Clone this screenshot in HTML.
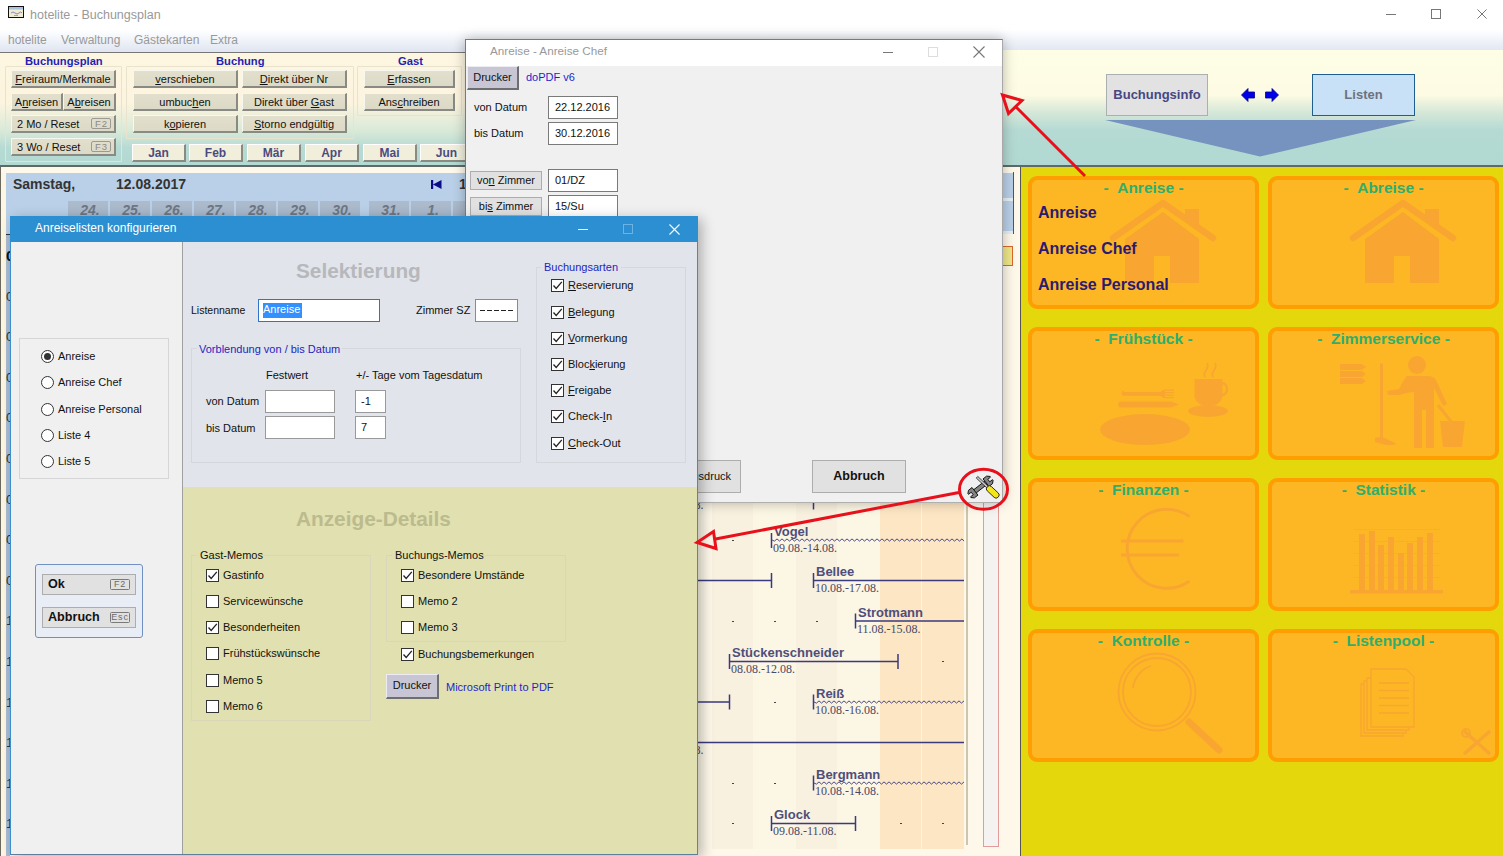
<!DOCTYPE html>
<html><head><meta charset="utf-8">
<style>
*{margin:0;padding:0;box-sizing:border-box}
html,body{width:1503px;height:856px;overflow:hidden;background:#fff;font-family:"Liberation Sans",sans-serif;position:relative}
.a{position:absolute}
.t{position:absolute;white-space:nowrap;line-height:1}
#titlebar{left:0;top:0;width:1503px;height:30px;background:#fff}
#menubar{left:0;top:30px;width:1503px;height:22px;background:linear-gradient(#fff,#dfe5f1)}
#tb{left:0;top:52px;width:1002px;height:114px;background:linear-gradient(#fdf6e1 0px,#fcf4de 50px,#d9e9d8 78px,#b6dad4 95px,#b3d9d3 114px);border-top:1px solid #777}
#tb2{left:1002px;top:50px;width:501px;height:116px;background:linear-gradient(#fefde6 0px,#fdfbe3 45px,#d6e8d8 62px,#b5dad4 80px,#b1d8d2 116px)}
.grp{position:absolute;border:1px solid #e9e2cc;border-radius:1px}
.btn{position:absolute;background:linear-gradient(#e2e0cd,#dcdac6);border-right:2px solid #8a8a84;border-bottom:2px solid #8a8a84;border-top:1px solid #f7f7ef;border-left:1px solid #f7f7ef;font-size:12px;color:#111;text-align:center;line-height:16px}
.lbl{position:absolute;font-weight:bold;color:#1f1fb3;line-height:1}
.mon{position:absolute;background:#f1efdc;border-right:2px solid #8a8a84;border-bottom:2px solid #8a8a84;border-top:1px solid #fff;border-left:1px solid #fff;font-size:12px;font-weight:bold;color:#4b4b7f;text-align:center;line-height:17px}
u{text-decoration:underline}
.rad{width:13px;height:13px;border:1px solid #333;border-radius:50%;background:#fff}
.cb{width:13px;height:13px;border:1px solid #333;background:#fff}
.cb svg{position:absolute;left:0;top:0}
.okb{background:#e1e1e1;border:1px solid #adadad;font-size:12.6px;font-weight:bold;line-height:19px;padding-left:5px;color:#111}
.fk2{position:absolute;right:5px;top:4px;width:20px;height:11px;border:1px solid #7a7a7a;border-radius:1.5px;font-size:9px;font-weight:normal;line-height:9px;color:#6a6a6a;text-align:center;letter-spacing:0.8px}
.inp2{background:#fff;border:1px solid #999;font-size:11px;line-height:21px;padding-left:5px;color:#111}
.inp{background:#fff;border:1px solid #7a7a7a;font-size:11px;line-height:21px;padding-left:6px;color:#111}
.zb{background:#e1e1e1;border:1px solid #adadad;font-size:11px;line-height:17px;text-align:center;color:#111}
.card{position:absolute;width:231px;height:133px;background:#fdb724;border:4px solid #ff9e00;border-radius:9px}
.ct{font-size:15.5px;font-weight:bold;color:#2fae6c}
.al{font-size:16px;font-weight:bold;color:#2c1a72}
.bn{font-size:13px;font-weight:bold;color:#4e4e7c}
.bd{font-family:"Liberation Serif",serif;font-size:12px;color:#4a4a66}
.dc{background:linear-gradient(#adbccd,#a6b6c9);color:#6e7782;font-weight:bold;font-style:italic;font-size:14px;text-align:center;line-height:18px;padding-left:4px}
.fk{position:absolute;right:3px;top:2px;width:20px;height:11px;border:1px solid #9a9a92;border-radius:2px;font-size:9.5px;line-height:9px;color:#8a8a85;text-align:center;letter-spacing:1px;padding-left:1px}
</style></head><body>
<div id="titlebar" class="a"></div>
<!-- app icon -->
<svg class="a" style="left:8px;top:6px" width="16" height="12"><rect x="0.5" y="0.5" width="15" height="11" fill="#eeecd2" stroke="#111"/><rect x="1" y="1" width="14" height="2.5" fill="#a9c3dc"/><path d="M3 7q2-2 4 0t4 0 3 0" fill="none" stroke="#8a7ab0" stroke-width="0.9"/><rect x="6" y="9" width="4" height="1" fill="#b0a080"/></svg>
<div class="t" style="left:30px;top:9px;font-size:12.5px;color:#999">hotelite - Buchungsplan</div>
<div class="a" style="left:1386px;top:14px;width:10px;height:1px;background:#777"></div>
<div class="a" style="left:1431px;top:9px;width:10px;height:10px;border:1px solid #777"></div>
<svg class="a" style="left:1477px;top:9px" width="10" height="10"><path d="M0.5 0.5L9.5 9.5M9.5 0.5L0.5 9.5" stroke="#777" stroke-width="1"/></svg>

<div id="menubar" class="a"></div>
<div class="t" style="left:8px;top:34px;font-size:12px;color:#999">hotelite</div>
<div class="t" style="left:61px;top:34px;font-size:12px;color:#999">Verwaltung</div>
<div class="t" style="left:134px;top:34px;font-size:12px;color:#999">Gästekarten</div>
<div class="t" style="left:210px;top:34px;font-size:12px;color:#999">Extra</div>

<div id="tb" class="a"></div>
<div id="tb2" class="a"></div>

<div class="a" style="left:0;top:165px;width:1503px;height:2px;background:#5f6a66"></div>
<!-- group boxes -->
<div class="grp" style="left:5px;top:66px;width:117px;height:96px"></div>
<div class="grp" style="left:126px;top:66px;width:228px;height:73px"></div>
<div class="grp" style="left:357px;top:66px;width:105px;height:50px"></div>
<div class="lbl" style="left:25px;top:56px;font-size:11.2px">Buchungsplan</div>
<div class="lbl" style="left:216px;top:56px;font-size:11.2px">Buchung</div>
<div class="lbl" style="left:398px;top:56px;font-size:11.2px">Gast</div>
<!-- buttons -->
<div class="btn" style="left:11px;top:70px;width:105px;height:18px;font-size:11px"><u>F</u>reiraum/Merkmale</div>
<div class="btn" style="left:11px;top:93px;width:52px;height:18px;font-size:11px">A<u>n</u>reisen</div>
<div class="btn" style="left:63px;top:93px;width:53px;height:18px;font-size:11px">A<u>b</u>reisen</div>
<div class="btn" style="left:11px;top:115px;width:105px;height:18px;font-size:11px;text-align:left;padding-left:5px">2 Mo / Reset<span class="fk">F2</span></div>
<div class="btn" style="left:11px;top:138px;width:105px;height:18px;font-size:11px;text-align:left;padding-left:5px">3 Wo / Reset<span class="fk">F3</span></div>
<div class="btn" style="left:133px;top:70px;width:105px;height:18px;font-size:11px"><u>v</u>erschieben</div>
<div class="btn" style="left:133px;top:93px;width:105px;height:18px;font-size:11px">umbuc<u>h</u>en</div>
<div class="btn" style="left:133px;top:115px;width:105px;height:18px;font-size:11px">k<u>o</u>pieren</div>
<div class="btn" style="left:242px;top:70px;width:105px;height:18px;font-size:11px"><u>D</u>irekt über Nr</div>
<div class="btn" style="left:242px;top:93px;width:105px;height:18px;font-size:11px">Direkt über <u>G</u>ast</div>
<div class="btn" style="left:242px;top:115px;width:105px;height:18px;font-size:11px"><u>S</u>torno endgültig</div>
<div class="btn" style="left:364px;top:70px;width:91px;height:18px;font-size:11px"><u>E</u>rfassen</div>
<div class="btn" style="left:364px;top:93px;width:91px;height:18px;font-size:11px">Ans<u>c</u>hreiben</div>
<!-- months -->
<div class="mon" style="left:132px;top:144px;width:54px;height:18px">Jan</div>
<div class="mon" style="left:189px;top:144px;width:54px;height:18px">Feb</div>
<div class="mon" style="left:247px;top:144px;width:54px;height:18px">Mär</div>
<div class="mon" style="left:305px;top:144px;width:54px;height:18px">Apr</div>
<div class="mon" style="left:363px;top:144px;width:54px;height:18px">Mai</div>
<div class="mon" style="left:420px;top:144px;width:54px;height:18px">Jun</div>
<!-- right side -->
<div class="a" style="left:1106px;top:74px;width:102px;height:42px;background:#e2e2e2;border:1px solid #aab0b0;font-weight:bold;font-size:13px;color:#474782;text-align:center;line-height:40px">Buchungsinfo</div>
<div class="a" style="left:1312px;top:74px;width:103px;height:42px;background:#c9e1f7;border:1px solid #1f5f8f;font-weight:bold;font-size:13px;color:#6d7280;text-align:center;line-height:40px">Listen</div>
<svg class="a" style="left:1240px;top:86px" width="40" height="18"><path d="M1.5 9L8 2.5V6H14.5V12H8V15.5Z" fill="#0000e8" stroke="#00008a" stroke-width="0.8"/><path d="M38.5 9L32 2.5V6H25.5V12H32V15.5Z" fill="#0000e8" stroke="#00008a" stroke-width="0.8"/></svg>
<svg class="a" style="left:1100px;top:117px" width="320" height="42"><path d="M5 3L316 3L160 39.5Z" fill="#7593be"/></svg>

<!-- booking plan -->
<div class="a" style="left:0;top:167px;width:1020px;height:689px;background:#fdf8e9"></div>
<div class="a" style="left:0;top:167px;width:1px;height:689px;background:#6a6a60"></div>
<div class="a" style="left:6px;top:173px;width:1008px;height:61px;background:#b9d0e8"></div>
<div class="a" style="left:1013px;top:172px;width:1px;height:62px;background:#555"></div>
<div class="a" style="left:1002px;top:198px;width:11px;height:3px;background:#e6eef6"></div>
<div class="a" style="left:1002px;top:231px;width:11px;height:3px;background:#e6eef6"></div>
<div class="t" style="left:13px;top:177px;font-size:14px;font-weight:bold;color:#333">Samstag,</div>
<div class="t" style="left:116px;top:177px;font-size:14px;font-weight:bold;color:#333">12.08.2017</div>
<svg class="a" style="left:430px;top:179px" width="13" height="11"><path d="M1 1H3.2V10H1Z M3 5.5L11.5 1V10Z" fill="#0a0a8a"/></svg>
<div class="t" style="left:459px;top:177px;font-size:14px;font-weight:bold;color:#333">1</div>
<div class="a dc" style="left:68px;top:201px;width:40px;height:16px">24.</div>
<div class="a dc" style="left:110px;top:201px;width:40px;height:16px">25.</div>
<div class="a dc" style="left:152px;top:201px;width:40px;height:16px">26.</div>
<div class="a dc" style="left:194px;top:201px;width:40px;height:16px">27.</div>
<div class="a dc" style="left:236px;top:201px;width:40px;height:16px">28.</div>
<div class="a dc" style="left:278px;top:201px;width:40px;height:16px">29.</div>
<div class="a dc" style="left:320px;top:201px;width:40px;height:16px">30.</div>
<div class="a dc" style="left:369px;top:201px;width:40px;height:16px">31.</div>
<div class="a dc" style="left:411px;top:201px;width:40px;height:16px">1.</div>
<div class="a dc" style="left:453px;top:201px;width:40px;height:16px"></div>
<div class="a" style="left:5px;top:234px;width:5px;height:622px;background:#a9bcd3"></div>
<div class="a" style="left:5px;top:234px;width:5px;height:1px;background:#333"></div>
<div class="a" style="left:1px;top:173px;width:5px;height:683px;background:#fdf6e3"></div>
<div class="a" style="left:712px;top:234px;width:41px;height:615px;background:#f9f1df"></div>
<div class="a" style="left:753px;top:234px;width:43px;height:615px;background:#fcf6e4"></div>
<div class="a" style="left:796px;top:234px;width:41px;height:615px;background:#f9f1df"></div>
<div class="a" style="left:837px;top:234px;width:43px;height:615px;background:#fcf6e4"></div>
<div class="a" style="left:880px;top:234px;width:42px;height:615px;background:#fde6c4"></div>
<div class="a" style="left:922px;top:234px;width:41.5px;height:615px;background:#fde6c4"></div>
<div class="a" style="left:921px;top:234px;width:1px;height:615px;background:#fff3e2"></div>
<div class="a" style="left:966px;top:234px;width:1.5px;height:611px;background:#cdc6ae"></div>
<div class="a" style="left:983px;top:234px;width:16px;height:613px;background:#f5f3f2;border:1px solid #e29a9a;border-top:none"></div>
<div class="a" style="left:1002px;top:246px;width:11px;height:20px;background:#eee68a;border:1px solid #d9682a;border-left:none"></div>
<div class="a" style="left:1020px;top:167px;width:1px;height:689px;background:#555"></div>
<svg class="a" style="left:0;top:0" width="1020" height="856">
<rect x="812.75" y="494.5" width="1.5" height="15" fill="#3a3a7e"/>
<rect x="732" y="540" width="2" height="1" fill="#444"/>
<rect x="770.75" y="533.0" width="1.5" height="15" fill="#3a3a7e"/>
<path d="M772 540.0 L774.5 541.1 L777.0 538.9 L779.5 541.1 L782.0 538.9 L784.5 541.1 L787.0 538.9 L789.5 541.1 L792.0 538.9 L794.5 541.1 L797.0 538.9 L799.5 541.1 L802.0 538.9 L804.5 541.1 L807.0 538.9 L809.5 541.1 L812.0 538.9 L814.5 541.1 L817.0 538.9 L819.5 541.1 L822.0 538.9 L824.5 541.1 L827.0 538.9 L829.5 541.1 L832.0 538.9 L834.5 541.1 L837.0 538.9 L839.5 541.1 L842.0 538.9 L844.5 541.1 L847.0 538.9 L849.5 541.1 L852.0 538.9 L854.5 541.1 L857.0 538.9 L859.5 541.1 L862.0 538.9 L864.5 541.1 L867.0 538.9 L869.5 541.1 L872.0 538.9 L874.5 541.1 L877.0 538.9 L879.5 541.1 L882.0 538.9 L884.5 541.1 L887.0 538.9 L889.5 541.1 L892.0 538.9 L894.5 541.1 L897.0 538.9 L899.5 541.1 L902.0 538.9 L904.5 541.1 L907.0 538.9 L909.5 541.1 L912.0 538.9 L914.5 541.1 L917.0 538.9 L919.5 541.1 L922.0 538.9 L924.5 541.1 L927.0 538.9 L929.5 541.1 L932.0 538.9 L934.5 541.1 L937.0 538.9 L939.5 541.1 L942.0 538.9 L944.5 541.1 L947.0 538.9 L949.5 541.1 L952.0 538.9 L954.5 541.1 L957.0 538.9 L959.5 541.1 L962.0 538.9 L964.0 541.1" fill="none" stroke="#4a4a86" stroke-width="1"/>
<rect x="698" y="579.75" width="73.5" height="1.5" fill="#3a3a7e"/>
<rect x="770.75" y="573.0" width="1.5" height="15" fill="#3a3a7e"/>
<rect x="812.75" y="573.0" width="1.5" height="15" fill="#3a3a7e"/>
<rect x="813.5" y="579.75" width="150.5" height="1.5" fill="#3a3a7e"/>
<rect x="732" y="621" width="2" height="1" fill="#444"/>
<rect x="774" y="621" width="2" height="1" fill="#444"/>
<rect x="816" y="621" width="2" height="1" fill="#444"/>
<rect x="854.75" y="613.5" width="1.5" height="15" fill="#3a3a7e"/>
<rect x="855.5" y="620.25" width="108.5" height="1.5" fill="#3a3a7e"/>
<rect x="728.75" y="654.0" width="1.5" height="15" fill="#3a3a7e"/>
<rect x="729.5" y="660.75" width="168.5" height="1.5" fill="#3a3a7e"/>
<rect x="897.25" y="654.0" width="1.5" height="15" fill="#3a3a7e"/>
<rect x="942" y="661" width="2" height="1" fill="#444"/>
<rect x="698" y="701.25" width="31.5" height="1.5" fill="#3a3a7e"/>
<rect x="728.75" y="694.5" width="1.5" height="15" fill="#3a3a7e"/>
<rect x="774" y="702" width="2" height="1" fill="#444"/>
<rect x="812.75" y="694.5" width="1.5" height="15" fill="#3a3a7e"/>
<path d="M814 702.0 L816.5 703.1 L819.0 700.9 L821.5 703.1 L824.0 700.9 L826.5 703.1 L829.0 700.9 L831.5 703.1 L834.0 700.9 L836.5 703.1 L839.0 700.9 L841.5 703.1 L844.0 700.9 L846.5 703.1 L849.0 700.9 L851.5 703.1 L854.0 700.9 L856.5 703.1 L859.0 700.9 L861.5 703.1 L864.0 700.9 L866.5 703.1 L869.0 700.9 L871.5 703.1 L874.0 700.9 L876.5 703.1 L879.0 700.9 L881.5 703.1 L884.0 700.9 L886.5 703.1 L889.0 700.9 L891.5 703.1 L894.0 700.9 L896.5 703.1 L899.0 700.9 L901.5 703.1 L904.0 700.9 L906.5 703.1 L909.0 700.9 L911.5 703.1 L914.0 700.9 L916.5 703.1 L919.0 700.9 L921.5 703.1 L924.0 700.9 L926.5 703.1 L929.0 700.9 L931.5 703.1 L934.0 700.9 L936.5 703.1 L939.0 700.9 L941.5 703.1 L944.0 700.9 L946.5 703.1 L949.0 700.9 L951.5 703.1 L954.0 700.9 L956.5 703.1 L959.0 700.9 L961.5 703.1 L964.0 700.9" fill="none" stroke="#4a4a86" stroke-width="1"/>
<rect x="698" y="741.75" width="266" height="1.5" fill="#3a3a7e"/>
<rect x="732" y="783" width="2" height="1" fill="#444"/>
<rect x="774" y="783" width="2" height="1" fill="#444"/>
<rect x="812.75" y="775.5" width="1.5" height="15" fill="#3a3a7e"/>
<path d="M814 783.0 L816.5 784.1 L819.0 781.9 L821.5 784.1 L824.0 781.9 L826.5 784.1 L829.0 781.9 L831.5 784.1 L834.0 781.9 L836.5 784.1 L839.0 781.9 L841.5 784.1 L844.0 781.9 L846.5 784.1 L849.0 781.9 L851.5 784.1 L854.0 781.9 L856.5 784.1 L859.0 781.9 L861.5 784.1 L864.0 781.9 L866.5 784.1 L869.0 781.9 L871.5 784.1 L874.0 781.9 L876.5 784.1 L879.0 781.9 L881.5 784.1 L884.0 781.9 L886.5 784.1 L889.0 781.9 L891.5 784.1 L894.0 781.9 L896.5 784.1 L899.0 781.9 L901.5 784.1 L904.0 781.9 L906.5 784.1 L909.0 781.9 L911.5 784.1 L914.0 781.9 L916.5 784.1 L919.0 781.9 L921.5 784.1 L924.0 781.9 L926.5 784.1 L929.0 781.9 L931.5 784.1 L934.0 781.9 L936.5 784.1 L939.0 781.9 L941.5 784.1 L944.0 781.9 L946.5 784.1 L949.0 781.9 L951.5 784.1 L954.0 781.9 L956.5 784.1 L959.0 781.9 L961.5 784.1 L964.0 781.9" fill="none" stroke="#4a4a86" stroke-width="1"/>
<rect x="732" y="823" width="2" height="1" fill="#444"/>
<rect x="770.75" y="816.0" width="1.5" height="15" fill="#3a3a7e"/>
<rect x="771.5" y="822.75" width="84.0" height="1.5" fill="#3a3a7e"/>
<rect x="854.75" y="816.0" width="1.5" height="15" fill="#3a3a7e"/>
<rect x="900" y="823" width="2" height="1" fill="#444"/>
<rect x="942" y="823" width="2" height="1" fill="#444"/>
<rect x="1001" y="254" width="2" height="1" fill="#444"/>
<rect x="1001" y="400" width="2" height="1" fill="#444"/>
</svg>
<div class="t bd" style="left:694.5px;top:499px">8.</div>
<div class="t bn" style="left:774px;top:525px">Vogel</div>
<div class="t bd" style="left:773px;top:542px">09.08.-14.08.</div>
<div class="t bn" style="left:816px;top:565px">Bellee</div>
<div class="t bd" style="left:815px;top:582px">10.08.-17.08.</div>
<div class="t bn" style="left:858px;top:606px">Strotmann</div>
<div class="t bd" style="left:857px;top:623px">11.08.-15.08.</div>
<div class="t bn" style="left:732px;top:646px">Stückenschneider</div>
<div class="t bd" style="left:731px;top:663px">08.08.-12.08.</div>
<div class="t bn" style="left:816px;top:687px">Reiß</div>
<div class="t bd" style="left:815px;top:704px">10.08.-16.08.</div>
<div class="t bd" style="left:694.5px;top:744px">8.</div>
<div class="t bn" style="left:816px;top:768px">Bergmann</div>
<div class="t bd" style="left:815px;top:785px">10.08.-14.08.</div>
<div class="t bn" style="left:774px;top:808px">Glock</div>
<div class="t bd" style="left:773px;top:825px">09.08.-11.08.</div>

<!-- yellow panel -->
<div class="a" style="left:1021px;top:167px;width:482px;height:689px;background:#e4d80c"></div>
<div class="card" style="left:1028px;top:176px"></div>
<div class="card" style="left:1268px;top:176px"></div>
<div class="card" style="left:1028px;top:327px"></div>
<div class="card" style="left:1268px;top:327px"></div>
<div class="card" style="left:1028px;top:478px"></div>
<div class="card" style="left:1268px;top:478px"></div>
<div class="card" style="left:1028px;top:629px"></div>
<div class="card" style="left:1268px;top:629px"></div>
<svg class="a" style="left:1109px;top:200px" width="110" height="90"><path d="M4 38L54 3L104 38" fill="none" stroke="#f8a631" stroke-width="6.5" stroke-linecap="round" stroke-linejoin="round"/><path d="M76 9H90V30L76 20Z" fill="#f8a631"/><path d="M16 39L54 12L90 39V83H61V56H45V83H16Z" fill="#f8a631"/></svg>
<svg class="a" style="left:1349px;top:200px" width="110" height="90"><path d="M4 38L54 3L104 38" fill="none" stroke="#f8a631" stroke-width="6.5" stroke-linecap="round" stroke-linejoin="round"/><path d="M76 9H90V30L76 20Z" fill="#f8a631"/><path d="M16 39L54 12L90 39V83H61V56H45V83H16Z" fill="#f8a631"/></svg>
<svg class="a" style="left:1095px;top:355px" width="140" height="95"><ellipse cx="50" cy="74.5" rx="45" ry="15.5" fill="#f8a631"/><path d="M29 37h36l4-2.5h10v1.2h-9v1.3h9v1.2h-9v1.3h9v1.2h-9v1.3h9v1.2h-10l-4-2.5h-36a2.5 2.5 0 0 1 0-5z" fill="#f8a631"/><path d="M26 46.5h50q8 3 8 3l-8 3h-50a3 3 0 0 1 0-6z" fill="#f8a631"/><path d="M99.5 24h28v18a12 12 0 0 1 -12 9h-4a12 12 0 0 1 -12 -9z" fill="#f8a631"/><path d="M127 28a5 6 0 0 1 0 12" fill="none" stroke="#f8a631" stroke-width="2.5"/><ellipse cx="113" cy="56" rx="20" ry="6" fill="#f8a631"/><path d="M110 22c-4-5 6-8 2-14M118 22c-4-5 6-8 2-14" fill="none" stroke="#f8a631" stroke-width="1.8"/></svg>
<svg class="a" style="left:1335px;top:355px" width="135" height="95"><path d="M5 9h22l4 3-4 3h-22z M5 16h22l4 3-4 3h-22z M5 23h22l4 3-4 3h-22z" fill="#f8a631"/><rect x="45" y="8.5" width="3" height="75" fill="#f8a631"/><path d="M40 83q6-2 10 0l12 6q-8 3-22-2z" fill="#f8a631"/><circle cx="82" cy="10" r="9" fill="#f8a631"/><path d="M71 21h22q7 0 9 6l10 22l-4 2l-9-18v60h-8v-38h-4v38h-8v-56q-6 0-14 3h-12l-1-4l12-2q5-11 7-11z" fill="#f8a631"/><path d="M103 50l15 19" stroke="#f8a631" stroke-width="3"/><path d="M105 66h25l-3 26h-19z" fill="#f8a631"/></svg>
<svg class="a" style="left:1115px;top:503px" width="80" height="92"><path d="M74.5 13.6A39.5 39.5 0 1 0 74.5 78" fill="none" stroke="#f8a631" stroke-width="3"/><rect x="6" y="36.5" width="62.5" height="3" fill="#f8a631"/><rect x="6" y="50.5" width="58" height="3" fill="#f8a631"/></svg>
<svg class="a" style="left:1350px;top:528px" width="95" height="68"><g opacity="0.55"><rect x="4" y="1" width="86" height="0.8" fill="#f8a631"/><rect x="4" y="13" width="86" height="0.8" fill="#f8a631"/><rect x="4" y="25" width="86" height="0.8" fill="#f8a631"/><rect x="4" y="37" width="86" height="0.8" fill="#f8a631"/><rect x="4" y="49" width="86" height="0.8" fill="#f8a631"/></g><rect x="9" y="6" width="6" height="56" fill="#f8a631"/><rect x="19" y="3" width="6" height="59" fill="#f8a631"/><rect x="28" y="17" width="6" height="45" fill="#f8a631"/><rect x="38" y="9" width="6" height="53" fill="#f8a631"/><rect x="48" y="25" width="6" height="37" fill="#f8a631"/><rect x="57" y="15" width="6" height="47" fill="#f8a631"/><rect x="67" y="9" width="6" height="53" fill="#f8a631"/><rect x="77" y="5" width="6" height="57" fill="#f8a631"/><rect x="0" y="62" width="93" height="3.5" fill="#f8a631"/></svg>
<svg class="a" style="left:1115px;top:650px" width="115" height="108"><circle cx="42" cy="42" r="38.5" fill="none" stroke="#f8a631" stroke-width="1.8"/><circle cx="42" cy="42" r="34" fill="none" stroke="#f8a631" stroke-width="1.8"/><path d="M18 38a26 26 0 0 1 18 -22" fill="none" stroke="#f8a631" stroke-width="1.8"/><path d="M74 72L104 100" stroke="#f8a631" stroke-width="7" stroke-linecap="round"/></svg>
<svg class="a" style="left:1358px;top:666px" width="62" height="76"><path d="M3 18h42v52h-42z" fill="none" stroke="#f8a631" stroke-width="1.4"/><path d="M6 15h42v52h-42z" fill="#fdb724" stroke="#f8a631" stroke-width="1.4"/><path d="M9 12h42v52h-42z" fill="#fdb724" stroke="#f8a631" stroke-width="1.4"/><path d="M13 3h35l8 8v50h-43z" fill="#fdb724" stroke="#f8a631" stroke-width="1.4"/><path d="M21 17h30M21 24.5h30M21 32h30M21 39.5h30M21 47h30" stroke="#f8a631" stroke-width="1.4"/></svg>
<svg class="a" style="left:1460px;top:727px" width="34" height="30"><path d="M4 4L30 27M30 4L4 27" stroke="#f8a631" stroke-width="3.5"/><circle cx="6" cy="6" r="4" fill="none" stroke="#f8a631" stroke-width="2"/></svg>
<div class="t ct" style="left:1028px;top:180px;width:231px;text-align:center">-&nbsp;&nbsp;Anreise -</div>
<div class="t ct" style="left:1268px;top:180px;width:231px;text-align:center">-&nbsp;&nbsp;Abreise -</div>
<div class="t ct" style="left:1028px;top:331px;width:231px;text-align:center">-&nbsp;&nbsp;Frühstück -</div>
<div class="t ct" style="left:1268px;top:331px;width:231px;text-align:center">-&nbsp;&nbsp;Zimmerservice -</div>
<div class="t ct" style="left:1028px;top:482px;width:231px;text-align:center">-&nbsp;&nbsp;Finanzen -</div>
<div class="t ct" style="left:1268px;top:482px;width:231px;text-align:center">-&nbsp;&nbsp;Statistik -</div>
<div class="t ct" style="left:1028px;top:633px;width:231px;text-align:center">-&nbsp;&nbsp;Kontrolle -</div>
<div class="t ct" style="left:1268px;top:633px;width:231px;text-align:center">-&nbsp;&nbsp;Listenpool -</div>
<div class="t al" style="left:1038px;top:205px">Anreise</div>
<div class="t al" style="left:1038px;top:241px">Anreise Chef</div>
<div class="t al" style="left:1038px;top:277px">Anreise Personal</div>

<div class="t" style="left:6px;top:248.0px;font-size:15px;font-weight:bold;color:#111">0</div>
<div class="t" style="left:6px;top:289.6px;font-size:13px;color:#333">0</div>
<div class="t" style="left:6px;top:330.2px;font-size:13px;color:#333">0</div>
<div class="t" style="left:6px;top:370.8px;font-size:13px;color:#333">0</div>
<div class="t" style="left:6px;top:411.4px;font-size:13px;color:#333">0</div>
<div class="t" style="left:6px;top:452.0px;font-size:13px;color:#333">0</div>
<div class="t" style="left:6px;top:492.6px;font-size:13px;color:#333">0</div>
<div class="t" style="left:6px;top:533.2px;font-size:13px;color:#333">0</div>
<div class="t" style="left:6px;top:573.8px;font-size:13px;color:#333">0</div>
<div class="t" style="left:6px;top:614.4px;font-size:13px;color:#333">1</div>
<div class="t" style="left:6px;top:655.0px;font-size:13px;color:#333">1</div>
<div class="t" style="left:6px;top:695.6px;font-size:13px;color:#333">1</div>
<div class="t" style="left:6px;top:736.2px;font-size:13px;color:#333">1</div>
<div class="t" style="left:6px;top:776.8px;font-size:13px;color:#333">1</div>
<div class="t" style="left:6px;top:817.4px;font-size:13px;color:#333">1</div>
<!-- dialog 2: Anreise - Anreise Chef -->
<div class="a" style="left:465px;top:39px;width:538px;height:464px;background:#f0f0f0;border:1px solid #7a7a7a;border-right-color:#a8a8a8;border-bottom-color:#b0b0b0;box-shadow:0 0 12px rgba(0,0,0,0.28)"></div>
<div class="a" style="left:466px;top:40px;width:536px;height:26px;background:#fff"></div>
<div class="t" style="left:490px;top:45px;font-size:11.7px;color:#999">Anreise - Anreise Chef</div>
<div class="a" style="left:883px;top:52px;width:10px;height:1px;background:#777"></div>
<div class="a" style="left:928px;top:47px;width:10px;height:10px;border:1px solid #ddd"></div>
<svg class="a" style="left:973px;top:46px" width="12" height="12"><path d="M0.5 0.5L11.5 11.5M11.5 0.5L0.5 11.5" stroke="#777" stroke-width="1.1"/></svg>
<div class="a" style="left:467px;top:66px;width:52px;height:24px;background:#c8c6d4;border-right:2px solid #6e6e6e;border-bottom:2px solid #6e6e6e;border-top:1px solid #ececf2;border-left:1px solid #ececf2;font-size:11px;line-height:21px;text-align:center;color:#111">Drucker</div>
<div class="t" style="left:526px;top:72px;font-size:11px;color:#1f1fcf">doPDF v6</div>
<div class="t" style="left:474px;top:102px;font-size:11px;color:#111">von Datum</div>
<div class="a inp" style="left:548px;top:96px;width:70px;height:23px">22.12.2016</div>
<div class="t" style="left:474px;top:128px;font-size:11px;color:#111">bis Datum</div>
<div class="a inp" style="left:548px;top:122px;width:70px;height:23px">30.12.2016</div>
<div class="a zb" style="left:470px;top:171px;width:72px;height:19px">vo<u>n</u> Zimmer</div>
<div class="a inp" style="left:548px;top:169px;width:70px;height:23px">01/DZ</div>
<div class="a zb" style="left:470px;top:197px;width:72px;height:19px">bi<u>s</u> Zimmer</div>
<div class="a inp" style="left:548px;top:195px;width:70px;height:23px">15/Su</div>
<div class="a zb" style="left:660px;top:460px;width:81px;height:33px;line-height:31px;text-align:right;padding-right:9px">Testausdruck</div>
<div class="a zb" style="left:812px;top:460px;width:94px;height:33px;line-height:31px;font-weight:bold;font-size:12.5px">Abbruch</div>

<!-- dialog 1: Anreiselisten konfigurieren -->
<div class="a" style="left:10px;top:216px;width:688px;height:639px;background:#f0f0f0;border:1px solid #3b8fd0;border-right-color:#4f88b4;border-bottom-color:#5d7f98;box-shadow:4px 3px 12px rgba(0,0,0,0.28)"></div>
<div class="a" style="left:10px;top:216px;width:688px;height:26px;background:#2b8fd1"></div>
<div class="t" style="left:35px;top:222px;font-size:12px;color:#fff">Anreiselisten konfigurieren</div>
<div class="a" style="left:578px;top:229px;width:10px;height:1px;background:#fff"></div>
<div class="a" style="left:623px;top:224px;width:10px;height:10px;border:1px solid #6cb3e4"></div>
<svg class="a" style="left:669px;top:224px" width="11" height="11"><path d="M0.5 0.5L10.5 10.5M10.5 0.5L0.5 10.5" stroke="#fff" stroke-width="1.1"/></svg>
<!-- left panel -->
<div class="a" style="left:182px;top:242px;width:1px;height:612px;background:#a0a0a0"></div>
<div class="a" style="left:19px;top:338px;width:150px;height:141px;border:1px solid #d6d6d6"></div>
<div class="a rad" style="left:41px;top:349.5px"></div><div class="t" style="left:58px;top:350.8px;font-size:11px;color:#111">Anreise</div>
<div class="a rad" style="left:41px;top:375.5px"></div><div class="t" style="left:58px;top:376.8px;font-size:11px;color:#111">Anreise Chef</div>
<div class="a rad" style="left:41px;top:402.5px"></div><div class="t" style="left:58px;top:403.8px;font-size:11px;color:#111">Anreise Personal</div>
<div class="a rad" style="left:41px;top:428.5px"></div><div class="t" style="left:58px;top:429.8px;font-size:11px;color:#111">Liste 4</div>
<div class="a rad" style="left:41px;top:454.5px"></div><div class="t" style="left:58px;top:455.8px;font-size:11px;color:#111">Liste 5</div>
<div class="a" style="left:44px;top:352.5px;width:7px;height:7px;border-radius:50%;background:#333"></div>

<div class="a" style="left:35px;top:564px;width:108px;height:74px;background:#e9eef6;border:1px solid #7090c0;border-radius:3px"></div>
<div class="a okb" style="left:42px;top:574px;width:94px;height:21px">Ok<span class="fk2">F2</span></div>
<div class="a okb" style="left:42px;top:607px;width:94px;height:21px">Abbruch<span class="fk2">Esc</span></div>
<!-- right panel -->
<div class="a" style="left:183px;top:242px;width:514px;height:245px;background:#e1e4ea"></div>
<div class="a" style="left:183px;top:487px;width:514px;height:367px;background:#e1e0b0"></div>
<div class="t" style="left:296px;top:261px;font-size:20.8px;font-weight:bold;color:#b6b8bc">Selektierung</div>
<div class="t" style="left:191px;top:305px;font-size:10.5px;color:#111">Listenname</div>
<div class="a" style="left:258px;top:299px;width:122px;height:23px;background:#fff;border:1px solid #2f75c7"></div>
<div class="a" style="left:263px;top:303px;width:39px;height:15px;background:#3390ff"></div>
<div class="t" style="left:263px;top:304px;font-size:11px;color:#fff">Anreise</div>
<div class="t" style="left:416px;top:305px;font-size:11px;color:#111">Zimmer SZ</div>
<div class="a" style="left:475px;top:299px;width:43px;height:23px;background:#fff;border:1px solid #8a8a8a;font-size:11px;line-height:21px;padding-left:5px"><svg style="position:absolute;left:4px;top:10px" width="34" height="2"><path d="M0 0.5h5M7 0.5h5M14 0.5h5M21 0.5h5M28 0.5h5" stroke="#222" stroke-width="1"/></svg></div>
<!-- vorblendung group -->
<div class="a" style="left:191px;top:348px;width:330px;height:115px;border:1px solid #d4d7dc"></div>
<div class="a" style="left:197px;top:342px;width:145px;height:12px;background:#e1e4ea"></div>
<div class="t" style="left:199px;top:344px;font-size:11px;color:#1f1fbf">Vorblendung von / bis Datum</div>
<div class="t" style="left:266px;top:370px;font-size:11px;color:#111">Festwert</div>
<div class="t" style="left:356px;top:370px;font-size:11px;color:#111">+/- Tage vom Tagesdatum</div>
<div class="t" style="left:206px;top:396px;font-size:11px;color:#111">von Datum</div>
<div class="t" style="left:206px;top:423px;font-size:11px;color:#111">bis Datum</div>
<div class="a inp2" style="left:265px;top:390px;width:70px;height:23px"></div>
<div class="a inp2" style="left:265px;top:416px;width:70px;height:23px"></div>
<div class="a inp2" style="left:355px;top:390px;width:31px;height:23px">-1</div>
<div class="a inp2" style="left:355px;top:416px;width:31px;height:23px">7</div>
<!-- buchungsarten -->
<div class="a" style="left:536px;top:267px;width:150px;height:196px;border:1px solid #d4d7dc"></div>
<div class="a" style="left:541px;top:261px;width:80px;height:12px;background:#e1e4ea"></div>
<div class="t" style="left:544px;top:262px;font-size:11px;color:#1f1fbf">Buchungsarten</div>
<div class="a cb" style="left:551px;top:279.0px"><svg width="11" height="11"><path d="M1.5 5.5L4.2 8.5L9.8 1.8" fill="none" stroke="#222" stroke-width="1.3"/></svg></div><div class="t" style="left:568px;top:280.3px;font-size:11px;color:#111"><u>R</u>eservierung</div>
<div class="a cb" style="left:551px;top:305.5px"><svg width="11" height="11"><path d="M1.5 5.5L4.2 8.5L9.8 1.8" fill="none" stroke="#222" stroke-width="1.3"/></svg></div><div class="t" style="left:568px;top:306.8px;font-size:11px;color:#111"><u>B</u>elegung</div>
<div class="a cb" style="left:551px;top:332.0px"><svg width="11" height="11"><path d="M1.5 5.5L4.2 8.5L9.8 1.8" fill="none" stroke="#222" stroke-width="1.3"/></svg></div><div class="t" style="left:568px;top:333.3px;font-size:11px;color:#111"><u>V</u>ormerkung</div>
<div class="a cb" style="left:551px;top:358.0px"><svg width="11" height="11"><path d="M1.5 5.5L4.2 8.5L9.8 1.8" fill="none" stroke="#222" stroke-width="1.3"/></svg></div><div class="t" style="left:568px;top:359.3px;font-size:11px;color:#111">Bloc<u>k</u>ierung</div>
<div class="a cb" style="left:551px;top:384.0px"><svg width="11" height="11"><path d="M1.5 5.5L4.2 8.5L9.8 1.8" fill="none" stroke="#222" stroke-width="1.3"/></svg></div><div class="t" style="left:568px;top:385.3px;font-size:11px;color:#111"><u>F</u>reigabe</div>
<div class="a cb" style="left:551px;top:410.0px"><svg width="11" height="11"><path d="M1.5 5.5L4.2 8.5L9.8 1.8" fill="none" stroke="#222" stroke-width="1.3"/></svg></div><div class="t" style="left:568px;top:411.3px;font-size:11px;color:#111">Check-<u>I</u>n</div>
<div class="a cb" style="left:551px;top:437.0px"><svg width="11" height="11"><path d="M1.5 5.5L4.2 8.5L9.8 1.8" fill="none" stroke="#222" stroke-width="1.3"/></svg></div><div class="t" style="left:568px;top:438.3px;font-size:11px;color:#111"><u>C</u>heck-Out</div>

<div class="t" style="left:296px;top:509px;font-size:20.8px;font-weight:bold;color:#bbbb8e">Anzeige-Details</div>
<div class="a" style="left:191px;top:555px;width:180px;height:166px;border:1px solid #d8d7b9"></div>
<div class="a" style="left:197px;top:549px;width:66px;height:12px;background:#e1e0b0"></div>
<div class="t" style="left:200px;top:550px;font-size:11px;color:#111">Gast-Memos</div>
<div class="a" style="left:386px;top:555px;width:180px;height:87px;border:1px solid #d8d7b9"></div>
<div class="a" style="left:392px;top:549px;width:92px;height:12px;background:#e1e0b0"></div>
<div class="t" style="left:395px;top:550px;font-size:11px;color:#111">Buchungs-Memos</div>
<div class="a cb" style="left:206px;top:568.5px"><svg width="11" height="11"><path d="M1.5 5.5L4.2 8.5L9.8 1.8" fill="none" stroke="#222" stroke-width="1.3"/></svg></div><div class="t" style="left:223px;top:569.8px;font-size:11px;color:#111">Gastinfo</div>
<div class="a cb" style="left:206px;top:594.5px"></div><div class="t" style="left:223px;top:595.8px;font-size:11px;color:#111">Servicewünsche</div>
<div class="a cb" style="left:206px;top:620.5px"><svg width="11" height="11"><path d="M1.5 5.5L4.2 8.5L9.8 1.8" fill="none" stroke="#222" stroke-width="1.3"/></svg></div><div class="t" style="left:223px;top:621.8px;font-size:11px;color:#111">Besonderheiten</div>
<div class="a cb" style="left:206px;top:647.0px"></div><div class="t" style="left:223px;top:648.3px;font-size:11px;color:#111">Frühstückswünsche</div>
<div class="a cb" style="left:206px;top:673.5px"></div><div class="t" style="left:223px;top:674.8px;font-size:11px;color:#111">Memo 5</div>
<div class="a cb" style="left:206px;top:699.5px"></div><div class="t" style="left:223px;top:700.8px;font-size:11px;color:#111">Memo 6</div>
<div class="a cb" style="left:401px;top:568.5px"><svg width="11" height="11"><path d="M1.5 5.5L4.2 8.5L9.8 1.8" fill="none" stroke="#222" stroke-width="1.3"/></svg></div><div class="t" style="left:418px;top:569.8px;font-size:11px;color:#111">Besondere Umstände</div>
<div class="a cb" style="left:401px;top:594.5px"></div><div class="t" style="left:418px;top:595.8px;font-size:11px;color:#111">Memo 2</div>
<div class="a cb" style="left:401px;top:620.5px"></div><div class="t" style="left:418px;top:621.8px;font-size:11px;color:#111">Memo 3</div>
<div class="a cb" style="left:401px;top:647.5px"><svg width="11" height="11"><path d="M1.5 5.5L4.2 8.5L9.8 1.8" fill="none" stroke="#222" stroke-width="1.3"/></svg></div><div class="t" style="left:418px;top:648.8px;font-size:11px;color:#111">Buchungsbemerkungen</div>

<div class="a" style="left:386px;top:674px;width:53px;height:25px;background:#c8c6d4;border-right:2px solid #6e6e6e;border-bottom:2px solid #6e6e6e;border-top:1px solid #ececf2;border-left:1px solid #ececf2;font-size:11px;line-height:21px;text-align:center;color:#111">Drucker</div>
<div class="t" style="left:446px;top:682px;font-size:11px;color:#1f1fcf">Microsoft Print to PDF</div>

<!-- annotations -->
<svg class="a" style="left:0;top:0" width="1503" height="856">
<g fill="none" stroke="#e8101a" stroke-width="3" stroke-linejoin="miter">
<path d="M1085 176L1015.5 106.5"/>
<path d="M1002.5 95L1022 100.5L1008.5 113.5Z"/>
<path d="M959 492.5L715.5 539"/>
<path d="M697 542.5L713.5 531.5L716 548.5Z"/>
<ellipse cx="983.5" cy="489.3" rx="24" ry="20"/>
</g>
<g transform="translate(980.5,487) rotate(-38)">
<path d="M-8 -2H8V2H-8Z" fill="#858585" stroke="#111" stroke-width="0.9"/>
<path d="M7 -4.8H11.5L14 -2.5V-1.6H10.5V1.6H14V2.5L11.5 4.8H7Z" fill="#858585" stroke="#111" stroke-width="0.9"/>
<path d="M-7 -4.8H-11.5L-14 -2.5V-1.6H-10.5V1.6H-14V2.5L-11.5 4.8H-7Z" fill="#858585" stroke="#111" stroke-width="0.9"/>
</g>
<g transform="translate(988,487.5) rotate(43)">
<rect x="-15" y="-1.1" width="15" height="2.2" fill="#c8c8c8" stroke="#111" stroke-width="0.7"/>
<rect x="-1" y="-3" width="15" height="6" rx="2.8" fill="#f3e61c" stroke="#111" stroke-width="0.8"/>
</g>
</svg>
</body></html>
